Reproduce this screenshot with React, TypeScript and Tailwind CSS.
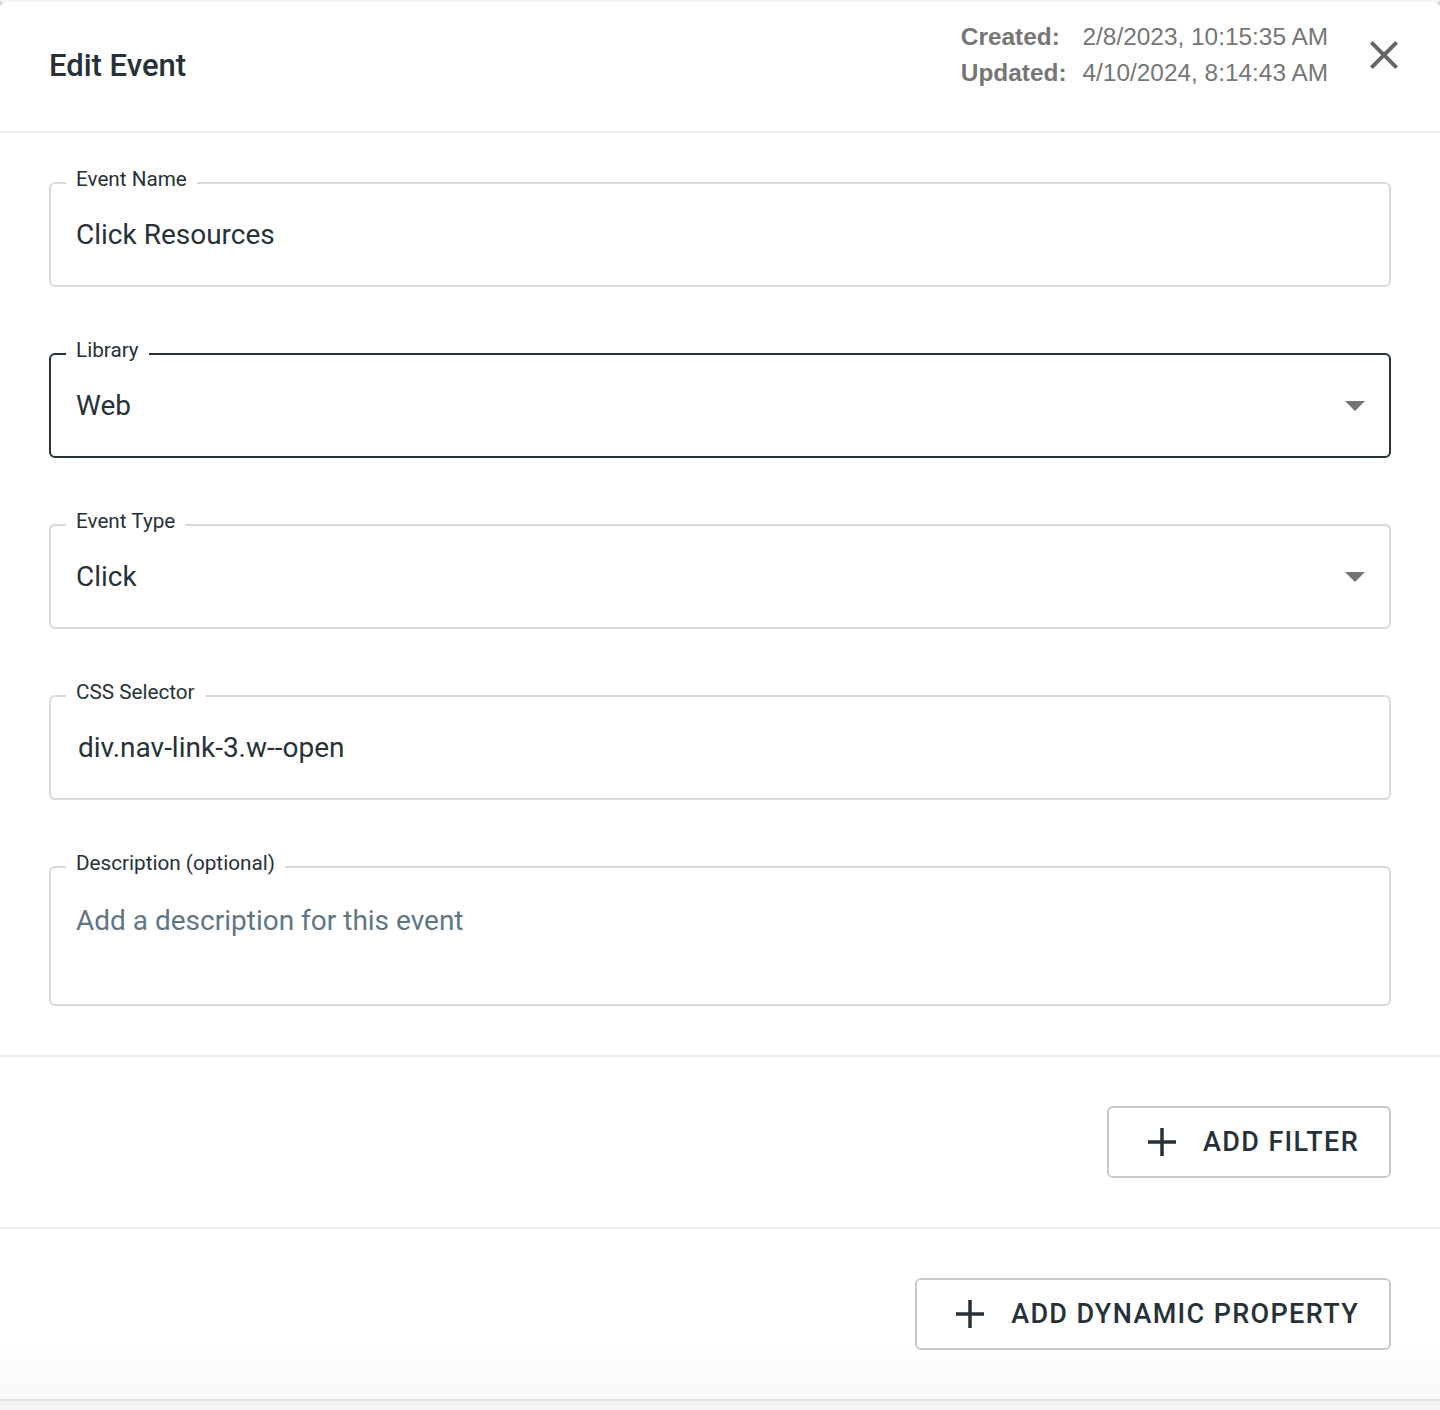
import React from "react"

type Field = {
  label: string
  value: string
  select?: boolean
  focused?: boolean
  placeholder?: boolean
  tall?: boolean
  shift?: boolean
}

const FIELDS: Field[] = [
  { label: "Event Name", value: "Click Resources" },
  { label: "Library", value: "Web", select: true, focused: true },
  { label: "Event Type", value: "Click", select: true },
  { label: "CSS Selector", value: "div.nav-link-3.w--open", shift: true },
  { label: "Description (optional)", value: "Add a description for this event", placeholder: true, tall: true },
]

function CloseIcon() {
  return (
    <svg viewBox="0 0 24 24" className="h-[48px] w-[48px]" fill="#666666">
      <path d="M19 6.41 17.59 5 12 10.59 6.41 5 5 6.41 10.59 12 5 17.59 6.41 19 12 13.41 17.59 19 19 17.59 13.41 12z" />
    </svg>
  )
}

function PlusIcon() {
  return (
    <svg viewBox="0 0 28 28" className="h-[28px] w-[28px]" stroke="#263238" strokeWidth={3.5}>
      <line x1="14" y1="0" x2="14" y2="28" />
      <line x1="0" y1="14" x2="28" y2="14" />
    </svg>
  )
}

function OutlinedField({ field }: { field: Field }) {
  const border = field.focused ? "border-[#263238]" : "border-[#d9d9d9]"
  const shape = field.tall ? "h-[140px] items-start pt-[37px]" : "h-[105px] items-center"
  return (
    <div className={`relative flex rounded-[6px] border-2 bg-white pl-[25px] pr-[24px] ${border} ${shape}`}>
      <span className="absolute left-[15px] top-[-17px] bg-white px-[10px] text-[20.7px] leading-[24px] text-[#263238]">
        {field.label}
      </span>
      <span
        className={`flex-1 text-[28px] leading-[32px] ${field.placeholder ? "text-[#607685]" : "text-[#263238]"} ${
          field.shift ? "pl-[2px]" : ""
        }`}
      >
        {field.value}
      </span>
      {field.select && (
        <svg viewBox="0 0 20 10" className="h-[10px] w-[20px]" fill="#757575">
          <path d="M0 0h20L10 10z" />
        </svg>
      )}
    </div>
  )
}

function OutlineButton({ label }: { label: string }) {
  return (
    <button className="flex h-[72px] items-center gap-[27px] rounded-[6px] border-2 border-[#c9c9c9] bg-white pl-[39px] pr-[30px] text-[27px] font-medium tracking-[1.35px] text-[#263238]">
      <PlusIcon />
      <span>{label}</span>
    </button>
  )
}

export default function App() {
  return (
    <div className="min-h-[1410px] bg-[#f4f4f4] pt-[2px] font-['Roboto',sans-serif]">
      <div className="bg-[#cfcfcf]">
        <div className="rounded-t-[6px] bg-white">
          {/* header */}
          <div className="flex h-[131px] items-start justify-between border-b-2 border-[#eeeeee] pl-[49px] pr-[32px] pt-[17px]">
            <h1 className="mt-[30px] text-[31px] font-medium leading-[34px] text-[#263238]">Edit Event</h1>
            <div className="flex items-start gap-[32px]">
              <div className="grid grid-cols-[auto_auto] gap-x-[16px] font-['Liberation_Sans',Arial,sans-serif] text-[24.4px] leading-[36px] text-[#767676]">
                <span className="font-bold">Created:</span>
                <span>2/8/2023, 10:15:35 AM</span>
                <span className="font-bold">Updated:</span>
                <span>4/10/2024, 8:14:43 AM</span>
              </div>
              <div className="mt-[12px]">
                <CloseIcon />
              </div>
            </div>
          </div>

          {/* form fields */}
          <div className="flex flex-col gap-[66px] border-b-2 border-[#eeeeee] px-[49px] pb-[49px] pt-[49px]">
            {FIELDS.map((f) => (
              <OutlinedField key={f.label} field={f} />
            ))}
          </div>

          <div className="flex justify-end border-b-2 border-[#eeeeee] px-[49px] py-[49px]">
            <OutlineButton label="ADD FILTER" />
          </div>

          <div className="flex justify-end border-b-2 border-[#e4e4e4] bg-gradient-to-b from-white from-[65%] to-[#f8f8f8] px-[49px] py-[49px]">
            <OutlineButton label="ADD DYNAMIC PROPERTY" />
          </div>
        </div>
      </div>
      <div className="h-[10px] bg-[#f4f4f4]" />
    </div>
  )
}
